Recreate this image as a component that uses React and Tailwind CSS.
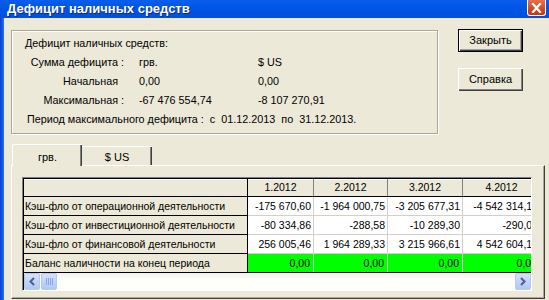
import React from "react";

const cols = [
  { w: "w-[66px]", h: "1.2012" },
  { w: "w-[74px]", h: "2.2012" },
  { w: "w-[75px]", h: "3.2012" },
  { w: "w-[78px]", h: "4.2012" },
];

const rows = [
  { label: "Кэш-фло от операционной деятельности", vals: ["-175 670,60", "-1 964 000,75", "-3 205 677,31", "-4 542 314,15"] },
  { label: "Кэш-фло от инвестиционной деятельности", vals: ["-80 334,86", "-288,58", "-10 289,30", "-290,03"] },
  { label: "Кэш-фло от финансовой деятельности", vals: ["256 005,46", "1 964 289,33", "3 215 966,61", "4 542 604,18"] },
];

function ArrowBtn({ dir }) {
  return (
    <div className="w-[16px] h-[17px] shrink-0 rounded-[2px] border border-[#B4C8F6] bg-[linear-gradient(to_bottom,#D6E2FC,#C0D3FA_50%,#B2C7F5)] flex items-center justify-center">
      <svg width="8" height="9" viewBox="0 0 8 9">
        {dir === "left" ? (
          <polyline points="6,1 2.5,4.5 6,8" fill="none" stroke="#4D6185" strokeWidth="2" />
        ) : (
          <polyline points="2,1 5.5,4.5 2,8" fill="none" stroke="#4D6185" strokeWidth="2" />
        )}
      </svg>
    </div>
  );
}

export default function App() {
  return (
    <div className="w-[549px] h-[300px] overflow-hidden flex flex-col bg-[#ECE9D8] text-[11px] text-black font-['Liberation_Sans',Arial,sans-serif]">
      {/* Title bar */}
      <div className="h-[18px] shrink-0 flex items-center bg-[linear-gradient(to_bottom,#0A5EEC_0%,#0056E4_40%,#0052DC_80%,#0A4FD6_100%)]">
        <div className="pl-[7px] flex-1 text-white font-bold text-[13px] leading-[16px] [text-shadow:1px_1px_0_#0A2A8A]">
          Дефицит наличных средств
        </div>
        <div className="w-[19px] h-[16px] mr-[3px] self-start border border-t-0 border-white rounded-b-[3px] bg-[linear-gradient(to_bottom,#E8714E,#D5481F_60%,#C23A16)] flex items-center justify-center">
          <svg width="11" height="10" viewBox="0 0 11 10">
            <path d="M2 1 L9 9 M9 1 L2 9" stroke="#fff" strokeWidth="2.2" strokeLinecap="square" />
          </svg>
        </div>
      </div>

      <div className="flex flex-1 min-h-0">
        <div className="w-[4px] shrink-0 bg-[linear-gradient(to_right,#0A3FCC,#0D55E6,#2A75F0)]" />
        <div className="flex-1 flex flex-col pl-[7px] pt-[12px]">
          {/* Top area */}
          <div className="flex items-start">
            <div className="w-[427px] h-[104px] shrink-0 border border-[#ACA899] shadow-[inset_1px_1px_0_#fff,1px_1px_0_#fff] pt-[3px] text-[10.8px]">
              <div className="leading-[19px] pl-[13px]">Дефицит наличных средств:</div>
              <div className="flex leading-[19px]">
                <div className="w-[112px] text-right">Сумма дефицита :</div>
                <div className="w-[119px] ml-[15px]">грв.</div>
                <div>$ US</div>
              </div>
              <div className="flex leading-[19px]">
                <div className="w-[112px] text-right pr-[6px]">Начальная</div>
                <div className="w-[119px] ml-[15px]">0,00</div>
                <div>0,00</div>
              </div>
              <div className="flex leading-[19px]">
                <div className="w-[112px] text-right">Максимальная :</div>
                <div className="w-[119px] ml-[15px]">-67 476 554,74</div>
                <div>-8 107 270,91</div>
              </div>
              <div className="leading-[19px] pl-[15px] whitespace-pre">
                {"Период максимального дефицита :  с  01.12.2013  по  31.12.2013."}
              </div>
            </div>
            <div className="ml-[20px] -mt-[1px] flex flex-col gap-[16px]">
              <div className="w-[65px] h-[23px] border border-black shadow-[inset_1px_1px_0_#fff,inset_-1px_-1px_0_#404040,inset_-2px_-2px_0_#A0A0A0] flex items-center justify-center">
                Закрыть
              </div>
              <div className="w-[65px] h-[23px] shadow-[inset_1px_1px_0_#fff,inset_-1px_-1px_0_#404040,inset_-2px_-2px_0_#808080] flex items-center justify-center">
                Справка
              </div>
            </div>
          </div>

          {/* Tabs */}
          <div className="mt-[10px] h-[21px] flex items-end pl-[1px]">
            <div className="relative z-10 w-[70px] h-[22px] -mb-[1px] bg-[#ECE9D8] border-l border-t border-white rounded-tl-[2px] shadow-[inset_-1px_0_0_#404040,inset_-2px_0_0_#808080] flex items-start justify-center pt-[4px]">
              грв.
            </div>
            <div className="w-[70px] h-[19px] border-t border-white shadow-[inset_-1px_0_0_#404040,inset_-2px_0_0_#808080] flex items-start justify-center pt-[2px]">
              $ US
            </div>
          </div>

          {/* Panel */}
          <div className="w-[534px] h-[134px] border-t border-l border-white border-r border-b border-r-[#404040] border-b-[#404040] shadow-[inset_-1px_-1px_0_#ACA899] pl-[10px] pt-[11px]">
            <div className="w-[510px] h-[114px] border border-t-[#808080] border-l-[#808080] border-r-white border-b-white text-[10.5px]">
              <div className="h-full border-t border-l border-black overflow-hidden flex flex-col">
                {/* header */}
                <div className="flex h-[18px] shrink-0 border-b border-black leading-[17px] shadow-[inset_0_1px_0_#fff]">
                  <div className="w-[224px] shrink-0 border-r border-black" />
                  {cols.map((c) => (
                    <div key={c.h} className={`${c.w} shrink-0 border-r border-[#808080] text-center`}>
                      {c.h}
                    </div>
                  ))}
                </div>
                {rows.map((r) => (
                  <div key={r.label} className="flex h-[19px] shrink-0 leading-[18px]">
                    <div className="w-[224px] shrink-0 border-r border-b border-black pl-[1px] whitespace-nowrap overflow-hidden">
                      {r.label}
                    </div>
                    {r.vals.map((v, i) => (
                      <div
                        key={i}
                        className={`${cols[i].w} shrink-0 bg-white border-r border-b border-[#D4D0C8] text-right pr-[2px] whitespace-nowrap overflow-hidden`}
                      >
                        {v}
                      </div>
                    ))}
                  </div>
                ))}
                <div className="flex h-[19px] shrink-0 leading-[18px] border-b border-black">
                  <div className="w-[224px] shrink-0 border-r border-black pl-[1px] whitespace-nowrap">
                    Баланс наличности на конец периода
                  </div>
                  {cols.map((c, i) => (
                    <div key={i} className={`${c.w} shrink-0 bg-[#00FF00] border-r border-[#E0E0E0] text-right pr-[3px]`}>
                      0,00
                    </div>
                  ))}
                </div>
                {/* scrollbar */}
                <div className="h-[17px] shrink-0 flex items-stretch bg-[linear-gradient(to_bottom,#F3F1EC,#FEFEFB_40%,#FEFEFB)]">
                  <ArrowBtn dir="left" />
                  <div className="w-[16px] h-[17px] shrink-0 ml-[1px] rounded-[2px] border border-[#B4C8F6] bg-[linear-gradient(to_bottom,#D6E2FC,#C0D3FA_50%,#B2C7F5)] flex items-center justify-center gap-[1px]">
                    <div className="w-[1px] h-[7px] bg-[#8CA6E0]" />
                    <div className="w-[1px] h-[7px] bg-[#8CA6E0]" />
                    <div className="w-[1px] h-[7px] bg-[#8CA6E0]" />
                    <div className="w-[1px] h-[7px] bg-[#8CA6E0]" />
                  </div>
                  <div className="flex-1" />
                  <ArrowBtn dir="right" />
                </div>
              </div>
            </div>
          </div>
        </div>
      </div>
    </div>
  );
}
